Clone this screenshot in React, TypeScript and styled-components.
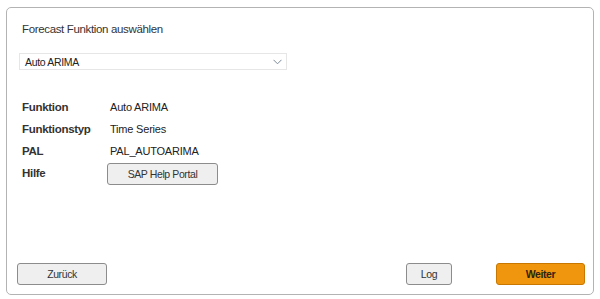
import React from "react";
import styled, { createGlobalStyle } from "styled-components";

const FONT = `"Liberation Sans", Arial, sans-serif`;

const Global = createGlobalStyle`
  html, body { margin: 0; padding: 0; background: #fff; }
  body { font-family: ${FONT}; color: #333; }
`;

const Panel = styled.div`
  box-sizing: border-box;
  margin: 7px 0 0 6px;
  width: 588px;
  height: 288px;
  border: 1px solid #b3b3b3;
  border-radius: 5px;
  display: flex;
  flex-direction: column;
  padding: 0 8px 0 10px;
`;

const Title = styled.div`
  font-size: 11.5px;
  letter-spacing: -0.35px;
  margin: 14px 0 0 5px;
  line-height: 15px;
  color: #333;
`;

const Select = styled.div`
  box-sizing: border-box;
  margin-top: 16px;
  margin-left: 2px;
  width: 268px;
  height: 17px;
  border: 1px solid #e6e6e6;
  display: flex;
  align-items: center;
  justify-content: space-between;
  padding: 0 4px 0 5px;
  font-size: 10.5px;
  letter-spacing: -0.33px;
  color: #222;
`;

const Grid = styled.div`
  display: grid;
  grid-template-columns: 88px auto;
  grid-auto-rows: 22px;
  margin: 30px 0 0 5px;
  align-items: start;
  justify-items: start;
`;

const Label = styled.div`
  font-size: 11.5px;
  letter-spacing: -0.3px;
  font-weight: bold;
  line-height: 14px;
  color: #333;
`;

const Value = styled.div`
  font-size: 11px;
  letter-spacing: -0.2px;
  line-height: 14px;
  color: #222;
`;

const Footer = styled.div`
  margin-top: auto;
  margin-bottom: 9px;
  display: flex;
  align-items: center;
`;

const Button = styled.button<{ $primary?: boolean; $w: number }>`
  box-sizing: border-box;
  width: ${(p) => p.$w}px;
  height: 22px;
  border-radius: 3px;
  border: 1px solid ${(p) => (p.$primary ? "#c87800" : "#8c8c8c")};
  background: ${(p) => (p.$primary ? "#f0960e" : "#efefef")};
  color: ${(p) => (p.$primary ? "#2e2210" : "#333")};
  font-family: ${FONT};
  font-size: 10.5px;
  letter-spacing: -0.4px;
  font-weight: ${(p) => (p.$primary ? "bold" : "normal")};
  padding: 0;
  cursor: pointer;
`;

const HelpButton = styled(Button)`
  margin-top: -3px;
  margin-left: -3px;
`;

const Spacer = styled.div`
  flex: 1;
`;

const Gap = styled.div<{ $w: number }>`
  width: ${(p) => p.$w}px;
`;

export default function App() {
  return (
    <>
      <Global />
      <Panel>
        <Title>Forecast Funktion auswählen</Title>
        <Select>
          <span>Auto ARIMA</span>
          <svg width="9" height="6" viewBox="0 0 9 6">
            <path d="M0.5 0.8 L4.5 4.8 L8.5 0.8" fill="none" stroke="#7a8a9a" strokeWidth="1" />
          </svg>
        </Select>
        <Grid>
          <Label>Funktion</Label>
          <Value>Auto ARIMA</Value>
          <Label>Funktionstyp</Label>
          <Value>Time Series</Value>
          <Label>PAL</Label>
          <Value>PAL_AUTOARIMA</Value>
          <Label>Hilfe</Label>
          <HelpButton $w={111}>SAP Help Portal</HelpButton>
        </Grid>
        <Footer>
          <Button $w={90}>Zurück</Button>
          <Spacer />
          <Button $w={46}>Log</Button>
          <Gap $w={44} />
          <Button $primary $w={89}>Weiter</Button>
        </Footer>
      </Panel>
    </>
  );
}
